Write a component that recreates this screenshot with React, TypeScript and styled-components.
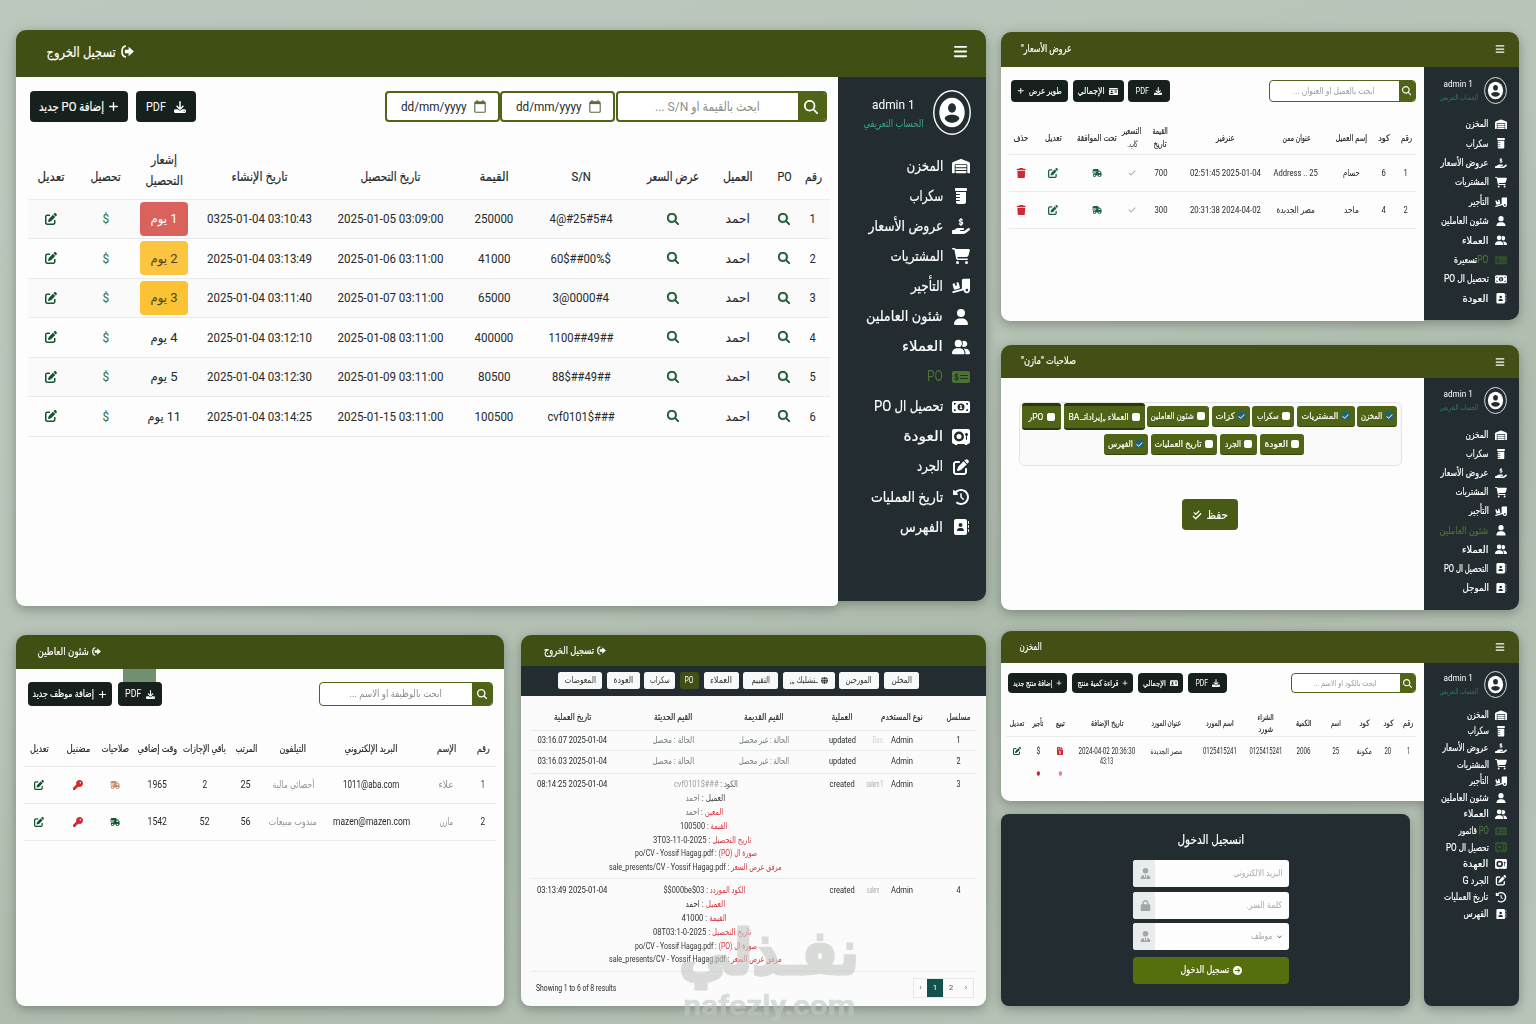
import React, { ReactNode, useLayoutEffect, useRef, useState } from "react";
import styled, { createGlobalStyle, css } from "styled-components";
import {
  FaWarehouse, FaPrescriptionBottle, FaHandHoldingDollar, FaCartShopping, FaTruckRampBox, FaUser, FaUserGroup,
  FaMoneyCheckDollar, FaMoneyBill1, FaVault, FaPenToSquare, FaClockRotateLeft, FaAddressBook, FaMagnifyingGlass,
  FaPlus, FaDownload, FaTruckFast, FaKey, FaTrash, FaBars, FaCheck, FaCheckDouble, FaLock, FaUserTie,
  FaChevronDown, FaCircleArrowRight, FaIdCard, FaFileInvoiceDollar, FaGlobe,
} from "react-icons/fa6";

const olive = "#404f13";
const oliveLight = "#4f6416";
const navy = "#232d31";
const ink = "#16201c";
const green = "#14532f";
const red = "#cf2a33";

const Global = createGlobalStyle`
  * { box-sizing: border-box; }
  body { margin: 0; font-family: Roboto, "DejaVu Sans Condensed", "DejaVu Sans", sans-serif; color: #24292b; }
  svg { display: block; flex: none; }
`;

/* Single-line text condensed horizontally to a given width */
const FitBox = styled.span<{ $w: number; $s: number; $c?: string; $b?: number }>`
  display: inline-flex; flex: none; justify-content: center; align-items: center;
  width: ${(p) => p.$w}px; height: ${(p) => Math.round(p.$s * 1.2)}px;
  font-size: ${(p) => p.$s}px; color: ${(p) => p.$c || "inherit"}; font-weight: ${(p) => (p.$b === 700 ? 700 : 400)};
  ${(p) => p.$b === 500 && css`-webkit-text-stroke: 0.18px currentColor;`}
  ${(p) => p.$b === 700 && css`-webkit-text-stroke: ${p.$s > 40 ? 3 : 0.5}px currentColor;`}
`;
const FitInner = styled.span`
  flex: none; white-space: nowrap; line-height: 1; display: inline-block;
`;
type TProps = { w: number; s?: number; c?: string; b?: number; ltr?: boolean; children: ReactNode };
function T({ w, s = 12, c, b, ltr, children }: TProps) {
  const ref = useRef<HTMLSpanElement>(null);
  const [k, setK] = useState(1);
  useLayoutEffect(() => {
    if (ref.current) setK(w / ref.current.offsetWidth);
  }, [w, s, b]);
  return (
    <FitBox $w={w} $s={s} $c={c} $b={b}>
      <FitInner ref={ref} dir={ltr ? "ltr" : "rtl"} style={{ transform: `scaleX(${k})` }}>{children}</FitInner>
    </FitBox>
  );
}

const Page = styled.main`
  position: relative; width: 1536px; height: 1024px; overflow: hidden;
  padding: 30px 17px 0 16px; display: flex; gap: 15px;
  background: linear-gradient(160deg, #bcc8bd 0%, #b8c4b8 40%, #aebcad 62%, #bac5b9 100%);
`;
const Left = styled.div`width: 970px; display: flex; flex-direction: column; gap: 29px;`;
const Bottom = styled.div`display: flex; gap: 17px;`;
const Right = styled.div`width: 518px; display: flex; flex-direction: column; padding-top: 2px;`;

const shadow = css`filter: drop-shadow(0 3px 6px rgba(50, 65, 50, 0.42));`;
const Window = styled.section<{ $w: number; $h: number; $mb?: number }>`
  width: ${(p) => p.$w}px; height: ${(p) => p.$h}px; margin-bottom: ${(p) => p.$mb || 0}px;
  display: flex; flex-direction: column; ${shadow}
`;
const TopBar = styled.header<{ $h: number; $pl: number; $pr: number; $bg?: string; $pb?: number }>`
  height: ${(p) => p.$h}px; flex: none; padding: 0 ${(p) => p.$pr}px ${(p) => p.$pb ?? 4}px ${(p) => p.$pl}px;
  display: flex; align-items: center; justify-content: space-between; color: #fff;
  background: ${(p) => p.$bg || olive}; border-radius: 10px 10px 0 0;
`;
const TitleGroup = styled.div<{ $g?: number }>`display: flex; align-items: center; gap: ${(p) => p.$g ?? 5}px;`;
const Split = styled.div`flex: 1; min-height: 0; display: flex; align-items: flex-start;`;
const Content = styled.div<{ $h?: number; $r?: string; $p: string; $bg?: string; $fixed?: boolean }>`
  flex: ${(p) => (p.$fixed ? "none" : 1)}; min-width: 0; height: ${(p) => (p.$h ? p.$h + "px" : "100%")};
  background: ${(p) => p.$bg || "#fdfdfd"}; border-radius: ${(p) => p.$r || "0 0 0 9px"};
  padding: ${(p) => p.$p}; display: flex; flex-direction: column;
`;

const Side = styled.aside<{ $w: number; $h: number; $r?: string }>`
  width: ${(p) => p.$w}px; height: ${(p) => p.$h}px; flex: none; background: ${navy};
  border-radius: ${(p) => p.$r || "0 0 10px 0"}; color: #fff; display: flex; flex-direction: column;
`;
const Profile = styled.div<{ $big?: boolean; $h: number; $pt: number }>`
  height: ${(p) => p.$h}px; flex: none; padding: ${(p) => p.$pt}px ${(p) => (p.$big ? 15.5 : 12)}px 0 0;
  display: flex; justify-content: flex-end; align-items: flex-start; gap: ${(p) => (p.$big ? 9 : 6)}px;
`;
const ProfileText = styled.div<{ $big?: boolean }>`
  display: flex; flex-direction: column; align-items: center; gap: ${(p) => (p.$big ? 5 : 3)}px;
  padding-top: ${(p) => (p.$big ? 6 : 2)}px;
`;
const NavItem = styled.div<{ $h: number; $big?: boolean; $off?: boolean; $dim?: boolean }>`
  height: ${(p) => p.$h}px; flex: none; display: flex; align-items: center; justify-content: flex-end;
  gap: ${(p) => (p.$big ? 9 : 6)}px; padding-right: ${(p) => (p.$big ? 16 : 12.5)}px;
  color: ${(p) => (p.$off ? "#4c7332" : "#fff")};
  & > svg { width: ${(p) => (p.$big ? 18 : 12)}px; height: ${(p) => (p.$big ? 16 : 10.5)}px;
    color: ${(p) => (p.$dim ? "#33522c" : "inherit")}; }
`;

function Avatar({ w, h }: { w: number; h: number }) {
  return (
    <svg width={w} height={h} viewBox="0 0 38 45">
      <ellipse cx="19" cy="22.5" rx="18.2" ry="21.7" fill="none" stroke="#fff" strokeWidth="1.4" />
      <ellipse cx="19" cy="22.5" rx="12.7" ry="14.7" fill="#fff" />
      <ellipse cx="19" cy="18" rx="4" ry="4.7" fill={navy} />
      <path d="M19 24.8c4.2 0 7.2 1.8 7.2 3.5 0 2.100-3.400 4.500-7.200 4.500s-7.200-2.400-7.200-4.500c0-1.700 3-3.500 7.200-3.500z" fill={navy} />
    </svg>
  );
}
function LogoutIcon({ s }: { s: number }) {
  return (
    <svg width={s} height={s} viewBox="0 0 14 14">
      <path d="M4.600 1.200C2.200 1.600 1.100 3.600 1.100 7s1.100 5.400 3.500 5.800" fill="none" stroke="#fff" strokeWidth="1.8" strokeLinecap="round" />
      <path d="M4.200 5.200h4V2L13.900 7l-5.700 5V8.800h-4z" fill="#fff" />
    </svg>
  );
}
function CalendarIcon() {
  return (
    <svg width="12" height="13" viewBox="0 0 12 13" fill="none" stroke="#5b6a40">
      <rect x=".8" y="1.900" width="10.400" height="10.300" rx="1" strokeWidth="1.100" />
      <path d="M1 3h10" strokeWidth="2.200" />
      <path d="M3 0v2M9 0v2" strokeWidth="1.200" />
    </svg>
  );
}

const I = {
  store: FaWarehouse, scrap: FaPrescriptionBottle, offers: FaHandHoldingDollar, cart: FaCartShopping, rent: FaTruckRampBox,
  user: FaUser, users: FaUserGroup, po: FaMoneyCheckDollar, cash: FaMoneyBill1, vault: FaVault, edit: FaPenToSquare,
  history: FaClockRotateLeft, book: FaAddressBook, card: FaIdCard,
};
type Nav = { i: keyof typeof I; t: ReactNode; w: number; off?: boolean; dim?: boolean };
type SideProps = { big?: boolean; w: number; h: number; top: number; pt: number; step: number; items: Nav[]; sub: string; r?: string };
function Sidebar({ big, w, h, top, pt, step, items, sub, r }: SideProps) {
  return (
    <Side $w={w} $h={h} $r={r}>
      <Profile $big={big} $h={top} $pt={pt}>
        <ProfileText $big={big}>
          <T w={big ? 43 : 29} s={big ? 13 : 9} ltr>admin 1</T>
          <T w={big ? 60 : 39} s={big ? 11 : 8} c={big ? "#38a58b" : "#28776a"}>{sub}</T>
        </ProfileText>
        <Avatar w={big ? 38 : 23} h={big ? 45 : 27} />
      </Profile>
      {items.map((n, k) => {
        const Icon = I[n.i];
        return (
          <NavItem key={k} $h={step} $big={big} $off={n.off} $dim={n.dim}>
            <T w={n.w} s={big ? 15 : 10} b={n.t === "PO" ? 400 : 500}>{n.t}</T>
            <Icon />
          </NavItem>
        );
      })}
    </Side>
  );
}

const Toolbar = styled.div<{ $h: number; $pl?: number; $pr?: number }>`
  height: ${(p) => p.$h}px; flex: none; display: flex; justify-content: space-between;
  padding: 0 ${(p) => p.$pr ?? 0}px 0 ${(p) => p.$pl ?? 0}px;
`;
const Group = styled.div<{ $g?: number }>`display: flex; gap: ${(p) => p.$g ?? 0}px; align-items: stretch;`;
const Btn = styled.button<{ $w: number }>`
  width: ${(p) => p.$w}px; border: 0; border-radius: 4px; padding: 0; background: ${ink}; color: #fff; font-family: inherit;
  display: flex; align-items: center; justify-content: center; gap: 4px;
`;
const Search = styled.div<{ $w: number }>`
  width: ${(p) => p.$w}px; border: 1.5px solid ${oliveLight}; border-radius: 4px; display: flex; background: #fff; overflow: hidden;
`;
const SearchField = styled.div`flex: 1; display: flex; align-items: center; justify-content: center;`;
const SearchBtn = styled.div<{ $w: number }>`
  width: ${(p) => p.$w}px; background: ${oliveLight}; color: #fff; display: flex; align-items: center; justify-content: center;
`;
const DateField = styled.div`
  width: 115px; border: 2px solid ${oliveLight}; border-radius: 4px; display: flex; align-items: center;
  justify-content: flex-end; gap: 7px; padding-right: 12px; background: #fff;
  &:nth-child(2) { margin-right: 1px; }
`;
const WideSearch = styled(Search)`border-width: 2px;`;
const Glass = styled(FaMagnifyingGlass)`width: 12px; height: 12px; color: ${green}; stroke: ${green}; stroke-width: 22px;`;

/* Tracks centred on the given x coordinates, with spacer tracks between them */
const tracks = (x0: number, cs: number[]) => {
  const half = cs.map((c, i) => Math.min(c - (i ? cs[i - 1] : 2 * x0 - c), (i < cs.length - 1 ? cs[i + 1] : 1e4) - c) / 2);
  const out: number[] = [cs[0] - half[0] - x0];
  cs.forEach((c, i) => {
    out.push(half[i] * 2);
    if (i < cs.length - 1) out.push(cs[i + 1] - half[i + 1] - c - half[i]);
  });
  return out.map((n) => n.toFixed(1) + "px").join(" ");
};
const Row = styled.div<{ $cols: string; $h: number; $bg?: string; $line?: boolean; $top?: boolean }>`
  display: grid; grid-template-columns: ${(p) => p.$cols}; height: ${(p) => p.$h}px; flex: none;
  background: ${(p) => p.$bg || "transparent"}; align-items: ${(p) => (p.$top ? "start" : "center")};
  border-bottom: 1px solid ${(p) => (p.$line === false ? "transparent" : "#e9ebea")};
`;
const Cell = styled.div<{ $i: number; $up?: number }>`
  grid-column: ${(p) => p.$i * 2 + 2}; min-width: 0; display: flex; flex-direction: column; align-items: center;
  justify-content: center; padding-bottom: ${(p) => p.$up || 0}px;
`;
const Lines = styled.div<{ $g: number }>`display: flex; flex-direction: column; align-items: center; gap: ${(p) => p.$g}px;`;
type RowProps = { cols: string; h: number; cells: ReactNode[]; bg?: string; line?: boolean; top?: boolean; up?: number[] };
function TRow({ cols, h, cells, bg, line, top, up }: RowProps) {
  return (
    <Row $cols={cols} $h={h} $bg={bg} $line={line} $top={top}>
      {cells.map((c, i) => <Cell key={i} $i={i} $up={up?.[i]}>{c}</Cell>)}
    </Row>
  );
}
const Gap = styled.div<{ $h: number }>`height: ${(p) => p.$h}px; flex: none;`;
const Badge = styled.div<{ $bg: string; $c: string }>`
  width: 48px; height: 34px; border-radius: 4px; display: flex; align-items: center; justify-content: center;
  background: ${(p) => p.$bg}; color: ${(p) => p.$c};
`;

/* ---------- Purchase orders ---------- */
const mainNav: Nav[] = [
  { i: "store", t: "المخزن", w: 37 }, { i: "scrap", t: "سكراب", w: 34 }, { i: "offers", t: "عروض الأسعار", w: 75 },
  { i: "cart", t: "المشتريات", w: 53 }, { i: "rent", t: "التأجير", w: 32 }, { i: "user", t: "شئون العاملين", w: 77 },
  { i: "users", t: "العملاء", w: 41 }, { i: "po", t: "PO", w: 16, off: true }, { i: "cash", t: "تحصيل ال PO", w: 69 },
  { i: "vault", t: "العودة", w: 39 }, { i: "edit", t: "الجرد", w: 26 }, { i: "history", t: "تاريخ العمليات", w: 72 },
  { i: "book", t: "الفهرس", w: 43 },
];
const poCols = tracks(28, [51, 106, 164, 259.5, 390, 494, 581, 673, 738, 784, 813]);
const poRows: [string, string, string, string, number, string, number][] = [
  ["1 يوم", "0325-01-04 03:10:43", "2025-01-05 03:09:00", "250000", 39, "4@#25#5#4", 63],
  ["2 يوم", "2025-01-04 03:13:49", "2025-01-06 03:11:00", "41000", 33, "60$##00%$", 60],
  ["3 يوم", "2025-01-04 03:11:40", "2025-01-07 03:11:00", "65000", 33, "3@0000#4", 57],
  ["4 يوم", "2025-01-04 03:12:10", "2025-01-08 03:11:00", "400000", 39, "1100##49##", 65],
  ["5 يوم", "2025-01-04 03:12:30", "2025-01-09 03:11:00", "80500", 33, "88$##49##", 59],
  ["11 يوم", "2025-01-04 03:14:25", "2025-01-15 03:11:00", "100500", 39, "cvf0101$###", 67],
];
const badges = [["#d9625d", "#fff"], ["#fbc441", "#4d4421"], ["#fbc233", "#4d4421"]];
function Orders() {
  const h = (w: number, t: string) => <T w={w} s={13} b={500}>{t}</T>;
  return (
    <Window $w={970} $h={576}>
      <TopBar $h={47} $pl={31} $pr={18}>
        <TitleGroup><T w={69} s={14} b={500}>تسجيل الخروج</T><LogoutIcon s={13} /></TitleGroup>
        <FaBars size={15} />
      </TopBar>
      <Split>
        <Content $h={529} $p="14px 8px 0 12px" $r="0 0 5px 9px">
          <Toolbar $h={31} $pl={2} $pr={3}>
            <Group $g={8}>
              <Btn $w={98}><T w={65} s={13} b={500}>إضافة PO جديد</T><FaPlus size={11} /></Btn>
              <Btn $w={60}><T w={20} s={13} ltr>PDF</T><Gap $h={0} /><FaDownload size={12} /></Btn>
            </Group>
            <Group>
              <DateField><T w={66} s={13.5} ltr>dd/mm/yyyy</T><CalendarIcon /></DateField>
              <DateField><T w={66} s={13.5} ltr>dd/mm/yyyy</T><CalendarIcon /></DateField>
              <WideSearch $w={211}>
                <SearchField><T w={105} s={13} c="#8b8f8c">ابحث بالقيمة او S/N ...</T></SearchField>
                <SearchBtn $w={27}><FaMagnifyingGlass size={14} /></SearchBtn>
              </WideSearch>
            </Group>
          </Toolbar>
          <Gap $h={29} />
          <TRow cols={poCols} h={48.5} up={[0, 0, 14]} cells={[
            h(27, "تعديل"), h(30, "تحصيل"), <Lines key="n" $g={5}>{h(26, "إشعار")}{h(37, "التحصيل")}</Lines>, h(56, "تاريخ الإنشاء"),
            h(60, "تاريخ التحصيل"), h(29, "القيمة"), h(19, "S/N"), h(52, "عرض السعر"), h(30, "العميل"), h(14, "PO"), h(17, "رقم"),
          ]} />
          {poRows.map((r, k) => (
            <TRow key={k} cols={poCols} h={39.5} bg={k % 2 ? undefined : "#fafafa"} cells={[
              <FaPenToSquare size={12} color={green} />,
              <T w={7} s={13.5} c="#2b6a44" ltr>$</T>,
              badges[k] ? <Badge $bg={badges[k][0]} $c={badges[k][1]}><T w={27} s={13}>{r[0]}</T></Badge> : <T w={k === 5 ? 33 : 27} s={13}>{r[0]}</T>,
              <T w={105} s={13} ltr>{r[1]}</T>, <T w={106} s={13} ltr>{r[2]}</T>, <T w={r[4]} s={13} ltr>{r[3]}</T>,
              <T w={r[6]} s={13} ltr>{r[5]}</T>, <Glass />, <T w={24} s={13}>احمد</T>,
              <Glass />, <T w={6} s={13} ltr>{k + 1}</T>,
            ]} />
          ))}
        </Content>
        <Sidebar big w={148.5} h={524} top={74} pt={13} step={30.1} items={mainNav} sub="الحساب التعريفي" />
      </Split>
    </Window>
  );
}

/* ---------- Employees ---------- */
const Tab = styled.div`width: 33px; height: 13px; margin-left: 99px; background: #71906f; flex: none;`;
const emCols = tracks(24, [39, 78, 115, 157, 204.5, 246, 293, 371, 446, 483]);
function Employees() {
  const h = (w: number, t: string) => <T w={w} s={10} b={500}>{t}</T>;
  const n = (w: number, t: string, c?: string) => <T w={w} s={10} c={c}>{t}</T>;
  return (
    <Window $w={488} $h={371}>
      <TopBar $h={34} $pl={22} $pr={12} $pb={2}>
        <TitleGroup $g={3}><T w={51} s={11} b={500}>شئون العاطين</T><LogoutIcon s={9} /></TitleGroup>
      </TopBar>
      <Content $r="0 0 9px 9px" $p="0 8px 0 8px">
        <Tab />
        <Toolbar $h={24} $pl={4} $pr={3}>
          <Group $g={6}>
            <Btn $w={84}><T w={61} s={10} b={500}>إضافة موظف جديد</T><FaPlus size={9} /></Btn>
            <Btn $w={44}><T w={16} s={10} ltr>PDF</T><FaDownload size={9} /></Btn>
          </Group>
          <Search $w={174}>
            <SearchField><T w={92} s={10} c="#8b8f8c">ابحث بالوظيفة او الاسم ...</T></SearchField>
            <SearchBtn $w={20}><FaMagnifyingGlass size={10.5} /></SearchBtn>
          </Search>
        </Toolbar>
        <Gap $h={26.5} />
        <TRow cols={emCols} h={34} cells={[
          h(19, "تعديل"), h(24, "مضنيل"), h(28, "صلاحيات"), h(40, "وقت إضافي"), h(43, "باقي الإجازات"), h(22, "المرتب"),
          h(26, "التيلفون"), h(53, "البريد الإلكتروني"), h(19, "الإسم"), h(13, "رقم"),
        ]} />
        <TRow cols={emCols} h={37} cells={[
          <FaPenToSquare size={10} color={green} />, <FaKey size={10} color={red} />, <FaTruckFast size={10} color="#cc8b68" />,
          n(19, "1965"), n(5, "2"), n(10, "25"), n(42, "أحصائي مالية", "#919693"), <T w={56} s={10} ltr>1011@aba.com</T>, n(15, "علاء", "#8a8f8c"), n(4, "1"),
        ]} />
        <TRow cols={emCols} h={37} cells={[
          <FaPenToSquare size={10} color={green} />, <FaKey size={10} color={red} />, <FaTruckFast size={10} color={green} />,
          n(19, "1542"), n(10, "52"), n(10, "56"), n(48, "مندوب مبيعات", "#919693"), <T w={77} s={10} ltr>mazen@mazen.com</T>, n(14, "مازن", "#8a8f8c"), n(5, "2"),
        ]} />
      </Content>
    </Window>
  );
}

/* ---------- Activity log ---------- */
const Strip = styled.nav`
  height: 30px; flex: none; background: ${navy}; display: flex; align-items: center; padding: 0 0 1px 37px; gap: 4.5px;
`;
const StripChip = styled.div<{ $w: number; $on?: boolean }>`
  width: ${(p) => p.$w}px; height: 17px; border-radius: 2.5px; display: flex; align-items: center; justify-content: center; gap: 3px;
  background: ${(p) => (p.$on ? olive : "#f7f9f8")}; color: ${(p) => (p.$on ? "#fff" : "#2b3236")};
`;
const strip: [number, string, number][] = [
  [44, "المعوضات", 31], [33, "العودة", 20], [31, "سكراب", 20], [19.5, "PO", 9], [35, "العملاء", 22], [35, "التقييم", 19],
  [52, "ـتشليك ,,,", 28], [40, "المورجين", 26], [35.5, "المخلن", 20],
];
const DetailLine = styled.div<{ $x: number }>`
  height: 13.9px; display: flex; align-items: center; margin-left: ${(p) => p.$x}px;
`;
const Key = styled.span<{ $c: string }>`color: ${(p) => p.$c};`;
const lgCols = tracks(531, [572.5, 673, 764, 842, 878, 902, 959]);
const DetailBox = styled.div`display: flex; flex-direction: column; align-items: center; width: 0; padding-left: 44px;`;
const Foot = styled.footer`height: 33px; display: flex; align-items: center; justify-content: space-between; padding: 0 2px 0 5px;`;
const Pager = styled.div`display: flex; height: 20px; border: 1px solid #e4e8e6; font-size: 8px;`;
const PageNo = styled.span<{ $on?: boolean; $w: number }>`
  width: ${(p) => p.$w}px; display: flex; align-items: center; justify-content: center; line-height: 1;
  background: ${(p) => (p.$on ? "#14534d" : "transparent")}; color: ${(p) => (p.$on ? "#fff" : "#555b58")};
`;
type Det = [string, string, number, number, string, string];
const det3: Det[] = [
  ["الكود", "cvf0101$###", 64, 22, "#5d6461", "#9a9f9c"], ["العميل", "احمد", 40, 20, "#3c4340", "#7b807d"],
  ["المعين", "احمد", 38, 18, "#d2353d", "#6b706d"], ["القيمة", "100500", 47, 18, "#d2353d", "#333"],
  ["تاريخ التحصيل", "3T03-11-0-2025", 98, 14, "#d2353d", "#333"], ["صورة ال (PO)", "po/CV - Yossif Hagag.pdf", 122, 2, "#d2353d", "#333"],
  ["مرفق عرض السعر", "sale_presents/CV - Yossif Hagag.pdf", 173, 0, "#d2353d", "#333"],
];
const det4: Det[] = [
  ["الكود الموردد", "$$000be$03", 82, 18, "#d2353d", "#333"], ["العميل", "احمد", 40, 20, "#d2353d", "#333"],
  ["القيمة", "41000", 45, 18, "#d2353d", "#333"], ["تاريخ التحصيل", "08T03:1-0-2025", 98, 14, "#d2353d", "#333"],
  ["صورة ال (PO)", "po/CV - Yossif Hagag.pdf", 122, 2, "#d2353d", "#333"],
  ["مرفق عرض السعر", "sale_presents/CV - Yossif Hagag.pdf", 173, 0, "#d2353d", "#333"],
];
function Details({ rows }: { rows: Det[] }) {
  return (
    <DetailBox>
      {rows.map((d, k) => (
        <DetailLine key={k} $x={d[3]}>
          <T w={d[2]} s={9}><Key $c={d[4]}>{d[0]}</Key> : <Key as="bdi" $c={d[5]}>{d[1]}</Key></T>
        </DetailLine>
      ))}
    </DetailBox>
  );
}
function Log() {
  const h = (w: number, t: string) => <T w={w} s={9.5} b={500}>{t}</T>;
  const n = (w: number, t: string, c?: string) => <T w={w} s={9} c={c}>{t}</T>;
  const d = (t: string) => <T w={70} s={9} ltr>{t}</T>;
  return (
    <Window $w={465} $h={371}>
      <TopBar $h={31} $pl={23} $pr={12} $pb={1}>
        <TitleGroup $g={3}><T w={50} s={11} b={500}>تسجيل الخروج</T><LogoutIcon s={9} /></TitleGroup>
      </TopBar>
      <Strip>
        {strip.map((c, k) => (
          <StripChip key={k} $w={c[0]} $on={k === 3}><T w={c[2]} s={9}>{c[1]}</T>{k === 6 && <FaGlobe size={7} />}</StripChip>
        ))}
      </Strip>
      <Content $r="0 0 9px 9px" $p="8px 10px 0 10px" $bg="#fbfbfb">
        <TRow cols={lgCols} h={26.5} cells={[
          h(37, "تاريخ العملية"), h(38, "القيم الحديثة"), h(40, "القيم القديمة"), h(21, "العملية"), null, h(42, "نوع المستخدم"), h(24, "مسلسل"),
        ]} />
        <TRow cols={lgCols} h={20.5} cells={[d("03:16.07 2025-01-04"), n(42, "الحالة : محصل", "#6f7c72"), n(50, "الحالة : غير محصل", "#6f7c72"), n(27, "updated"), n(10, "Ban", "#d0d3d1"), n(22, "Admin"), n(4, "1")]} />
        <TRow cols={lgCols} h={22.5} cells={[d("03:16.03 2025-01-04"), n(42, "الحالة : محصل", "#6f7c72"), n(50, "الحالة : غير محصل", "#6f7c72"), n(27, "updated"), null, n(22, "Admin"), n(4, "2")]} />
        <Gap $h={4} />
        <TRow top cols={lgCols} h={101} cells={[<DetailLine $x={0}>{d("08:14:25 2025-01-04")}</DetailLine>, <Details rows={det3} />, null,
          <DetailLine $x={0}>{n(25, "created")}</DetailLine>, <DetailLine $x={-6}>{n(17, "salem 1", "#a5aaa7")}</DetailLine>, <DetailLine $x={0}>{n(22, "Admin")}</DetailLine>, <DetailLine $x={0}>{n(4, "3")}</DetailLine>]} />
        <Gap $h={5} />
        <TRow top cols={lgCols} h={88} cells={[<DetailLine $x={0}>{d("03:13:49 2025-01-04")}</DetailLine>, <Details rows={det4} />, null,
          <DetailLine $x={0}>{n(25, "created")}</DetailLine>, <DetailLine $x={-10}>{n(12, "salem", "#a5aaa7")}</DetailLine>, <DetailLine $x={0}>{n(22, "Admin")}</DetailLine>, <DetailLine $x={0}>{n(4, "4")}</DetailLine>]} />
        <Foot>
          <T w={80} s={9} ltr>Showing 1 to 6 of 8 results</T>
          <Pager><PageNo $w={13}>‹</PageNo><PageNo $w={16} $on>1</PageNo><PageNo $w={16}>2</PageNo><PageNo $w={14}>›</PageNo></Pager>
        </Foot>
      </Content>
    </Window>
  );
}

/* ---------- Price offers ---------- */
const offersNav: Nav[] = [
  { i: "store", t: "المخزن", w: 23 }, { i: "scrap", t: "سكراب", w: 22 }, { i: "offers", t: "عروض الأسعار", w: 48 },
  { i: "cart", t: "المشتريات", w: 34 }, { i: "rent", t: "التأجير", w: 20 }, { i: "user", t: "شئون العاملين", w: 48 },
  { i: "users", t: "العملاء", w: 26 }, { i: "po", t: <><Key $c="#4c7332">PO</Key><Key $c="#fff">تسعيرة</Key></>, w: 34, dim: true },
  { i: "cash", t: "تحصيل ال PO", w: 45 }, { i: "book", t: "العودة", w: 26 },
];
const ofCols = tracks(1009, [1021, 1053, 1097, 1132, 1160.5, 1225, 1296, 1351, 1384, 1406]);
function Offers() {
  const h = (w: number, t: string) => <T w={w} s={9} b={500}>{t}</T>;
  const n = (w: number, t: string) => <T w={w} s={9.5}>{t}</T>;
  const acts = [<FaTrash size={10.5} color={red} />, <FaPenToSquare size={10} color="#17604b" />, <FaTruckFast size={10} color="#17604b" />, <FaCheck size={8} color="#a3aaa6" />];
  return (
    <Window $w={518} $h={289} $mb={24}>
      <TopBar $h={35} $pl={20} $pr={14} $bg="#434f15" $pb={1}>
        <T w={51} s={10.5} b={500}>عروض الأسعار"</T><FaBars size={10} />
      </TopBar>
      <Split>
        <Content $h={254} $p="13px 8px 0 8px">
          <Toolbar $h={22} $pl={2}>
            <Group $g={4.5}>
              <Btn $w={57}><FaPlus size={7.5} /><T w={33} s={9} b={500}>طوير عرض</T></Btn>
              <Btn $w={51}><T w={27} s={9} b={500}>الإجمالي</T><FaIdCard size={9} /></Btn>
              <Btn $w={42}><T w={14} s={9} ltr>PDF</T><FaDownload size={8.5} /></Btn>
            </Group>
            <Search $w={147}>
              <SearchField><T w={82} s={9} c="#999e9b">ابحث بالعميل او العنوان ...</T></SearchField>
              <SearchBtn $w={16}><FaMagnifyingGlass size={9.5} /></SearchBtn>
            </Search>
          </Toolbar>
          <Gap $h={20} />
          <TRow cols={ofCols} h={33} cells={[
            h(15, "حذف"), h(17, "تعديل"), h(40, "تحت الموافقة"), <Lines $g={2}>{h(19, "التسعير")}{h(10, "كاب..")}</Lines>,
            <Lines $g={2}>{h(15, "القيمة")}{h(13, "تاريخ")}</Lines>, h(19, "عنرفير"), h(28, "عنوان ممن"), h(32, "إسم العميل"), h(12, "كود"), h(11, "رقم"),
          ]} />
          <TRow cols={ofCols} h={37} cells={[...acts, n(13, "700"), <T w={71} s={9.5} ltr>02:51:45 2025-01-04</T>, <T w={44} s={9.5} ltr>Address .. 25</T>, n(17, "حسام"), n(4, "6"), n(4, "1")]} />
          <TRow cols={ofCols} h={37} cells={[...acts, n(13, "300"), <T w={71} s={9.5} ltr>20:31:38 2024-04-02</T>, n(38, "مصر الجديدة"), n(15, "ماجد"), n(4, "4"), n(4, "2")]} />
        </Content>
        <Sidebar w={95.5} h={253} top={47.5} pt={9.5} step={19.4} items={offersNav} sub="الحساب التعريفي" />
      </Split>
    </Window>
  );
}

/* ---------- Permissions ---------- */
const permsNav: Nav[] = [
  { i: "store", t: "المخزن", w: 23 }, { i: "scrap", t: "سكراب", w: 22 }, { i: "offers", t: "عروض الأسعار", w: 48 },
  { i: "cart", t: "المشتريات", w: 33 }, { i: "rent", t: "التأجير", w: 20 },
  { i: "user", t: <Key $c="#4c7332">شئون العاملين</Key>, w: 49 }, { i: "users", t: "العملاء", w: 26 },
  { i: "book", t: "التحصيل ال PO", w: 44 }, { i: "book", t: "الموجل", w: 26 },
];
const PermBox = styled.div`
  width: 383px; height: 64px; border: 1px solid #e3e5e4; border-radius: 6px; background: #fafafa; padding-top: 3px;
  display: flex; flex-direction: column; gap: 7px; align-items: center;
`;
const PermRow = styled.div<{ $g: number; $mr?: number }>`
  display: flex; height: 21px; gap: ${(p) => p.$g}px; align-items: stretch; margin-right: ${(p) => p.$mr || 0}px;
`;
const Perm = styled.div<{ $w: number; $tall?: boolean }>`
  width: ${(p) => p.$w}px; background: ${oliveLight}; border-radius: 3px; border-bottom: 1px solid #33420f; color: #fff; flex: none;
  display: flex; align-items: center; justify-content: center; gap: 3px;
  ${(p) => p.$tall && css`margin: -3px 0 -3px; border-top: 3px solid #2b3712; border-bottom: 2px solid #2b3712;`}
`;
const Box = styled.span<{ $on?: boolean }>`
  width: 8px; height: 8px; border-radius: 2px; background: ${(p) => (p.$on ? "#1d6474" : "#fff")}; color: #fff;
  display: flex; align-items: center; justify-content: center; flex: none;
`;
const SaveRow = styled.div`width: 383px; display: flex; justify-content: center; padding: 33px 2px 0 0;`;
const SaveBtn = styled.button`
  width: 56px; height: 31px; border: 0; border-radius: 4px; background: #485a15; color: #fff;
  display: flex; align-items: center; justify-content: center; gap: 5px; padding: 0; font-family: inherit;
`;
type P = [number, string, number, boolean?, boolean?];
const perms1: P[] = [
  [39, "POر", 15, false, true], [81, "العملاء ,,إيراداتـ.BA", 60, false, true], [62, "شئون العاملين", 43], [38, "كزات", 19, true], [42, "سكراب", 22],
  [58, "المشتريات", 37, true], [40, "المخزن", 21, true],
];
const perms2: P[] = [[44, "الفهرس", 25, true], [66, "تاريخ العمليات", 47], [37, "الجرد", 16], [44, "العودة", 24]];
const PermItems = ({ items }: { items: P[] }) => (
  <>{items.map((p, k) => (
    <Perm key={k} $w={p[0]} $tall={p[4]}><T w={p[2]} s={9} b={500}>{p[1]}</T><Box $on={p[3]}>{p[3] && <FaCheck size={7} />}</Box></Perm>
  ))}</>
);
function Permissions() {
  return (
    <Window $w={518} $h={265} $mb={21}>
      <TopBar $h={33} $pl={20} $pr={14} $bg="#434f15" $pb={0}>
        <T w={55} s={10.5} b={500}>صلاحيات "مازن"</T><FaBars size={10} />
      </TopBar>
      <Split>
        <Content $h={232} $p="24px 0 0 18px">
          <PermBox>
            <PermRow $g={2.5} $mr={2}><PermItems items={perms1} /></PermRow>
            <PermRow $g={3} $mr={14}><PermItems items={perms2} /></PermRow>
          </PermBox>
          <SaveRow><SaveBtn><FaCheckDouble size={10} /><T w={21} s={12} b={500}>حفظ</T></SaveBtn></SaveRow>
        </Content>
        <Sidebar w={95.5} h={232} top={47.5} pt={9} step={19.1} items={permsNav} sub="الحساب التعريفي" />
      </Split>
    </Window>
  );
}

/* ---------- Stock and sign-in ---------- */
const stockNav: Nav[] = [
  { i: "store", t: "المخزن", w: 22 }, { i: "scrap", t: "سكراب", w: 21 }, { i: "offers", t: "عروض الأسعار", w: 46 },
  { i: "cart", t: "المشتريات", w: 32 }, { i: "rent", t: "التأجير", w: 19 }, { i: "user", t: "شئون العاملين", w: 48 },
  { i: "users", t: "العملاء", w: 25 }, { i: "po", t: <><Key $c="#4c7332">PO</Key> <Key $c="#fff">قائمور</Key></>, w: 30, dim: true },
  { i: "vault", t: "تحصيل ال PO", w: 43, dim: true }, { i: "vault", t: "العهدة", w: 25 }, { i: "edit", t: "الجرد G", w: 26 },
  { i: "history", t: "تاريخ العمليات", w: 44 }, { i: "book", t: "الفهرس", w: 25 },
];
const stCols = tracks(1006, [1017, 1038, 1060, 1107, 1166, 1220, 1266, 1304, 1336, 1364, 1388, 1408]);
const Column = styled.div`width: 422.5px; flex: none; display: flex; flex-direction: column; gap: 13px;`;
const Login = styled.form`
  width: 409px; height: 192px; background: ${navy}; border-radius: 8px; display: flex; flex-direction: column; align-items: center;
  padding: 18px 0 0 11px; color: #fff;
`;
const Field = styled.div`
  width: 156px; height: 27px; margin-bottom: 4.5px; border-radius: 3px; background: #fdfdfd; color: #a8acaa; overflow: hidden;
  display: flex; justify-content: space-between; align-items: center; padding-right: 7px;
`;
const FieldIcon = styled.span`
  width: 22px; height: 100%; background: #e9ecec; display: flex; align-items: center; justify-content: center; color: #a1a7a6; padding-left: 2px;
`;
const Submit = styled.button`
  width: 156px; height: 27px; margin-top: 2px; border: 0; border-radius: 4px; background: #566f0e; color: #fff; font-family: inherit;
  display: flex; align-items: center; justify-content: center; gap: 4px;
`;
function Stock() {
  const h = (w: number, t: string) => <T w={w} s={8.5} b={500}>{t}</T>;
  const n = (w: number, t: string) => <T w={w} s={8.5}>{t}</T>;
  return (
    <Window $w={518} $h={375}>
      <TopBar $h={32} $pl={19} $pr={14} $bg="#434f15" $pb={0}>
        <T w={22} s={10.5} b={500}>المخزن</T><FaBars size={10} />
      </TopBar>
      <Split>
        <Column>
          <Content $h={138} $fixed $p="10px 8px 0 5px">
            <Toolbar $h={20} $pl={2}>
              <Group $g={5}>
                <Btn $w={59}><T w={39} s={8.5} b={500}>إضافة منتج جديد</T><FaPlus size={6} /></Btn>
                <Btn $w={61}><T w={41} s={8.5} b={500}>قراءة كمية منتج</T><FaPlus size={6} /></Btn>
                <Btn $w={45}><T w={23} s={8.5} b={500}>الإجمالي</T><FaIdCard size={8} /></Btn>
                <Btn $w={39}><T w={13} s={8.5} ltr>PDF</T><FaDownload size={8} /></Btn>
              </Group>
              <Search $w={125}>
                <SearchField><T w={63} s={8.5} c="#999e9b">ابحث بالكود او الاسم ...</T></SearchField>
                <SearchBtn $w={15}><FaMagnifyingGlass size={9} /></SearchBtn>
              </Search>
            </Toolbar>
            <Gap $h={18} />
            <TRow cols={stCols} h={26} cells={[
              h(15, "تعديل"), h(11, "تأجير"), h(9, "تبيع"), h(32, "تاريخ الإضافة"), h(30, "عنوان المورد"), h(28, "اسم المورد"),
              <Lines $g={2}>{h(16, "الشراء")}{h(14, "شورد")}</Lines>, h(16, "الكمية"), h(10, "اسم"), h(10, "كود"), h(10, "كود"), h(10, "رقم"),
            ]} />
            <TRow top cols={stCols} h={63} line={false} cells={[
              <><Gap $h={10} /><FaPenToSquare size={8} color={green} /></>,
              <><Gap $h={9} />{n(4, "$")}<Gap $h={13} /><T w={4} s={6} c={red}>●</T></>,
              <><Gap $h={10} /><FaFileInvoiceDollar size={8} color={red} /><Gap $h={14} /><T w={4} s={6} c="#e08488">●</T></>,
              <><Gap $h={9} /><T w={57} s={8.5} ltr>2024-04-02 20:36:30</T>{n(13, "43:13")}</>,
              <><Gap $h={9} />{n(32, "مصر الجديدة")}</>, <><Gap $h={9} />{n(34, "0125415241")}</>, <><Gap $h={9} />{n(33, "0125415241")}</>,
              <><Gap $h={9} />{n(14, "2006")}</>, <><Gap $h={9} />{n(7, "25")}</>, <><Gap $h={9} />{n(16, "مكونة")}</>,
              <><Gap $h={9} />{n(7, "20")}</>, <><Gap $h={9} />{n(3, "1")}</>,
            ]} />
          </Content>
          <Login>
            <T w={67} s={13.5} b={500}>انسجيل الدخول</T>
            <Gap $h={12} />
            <Field><FieldIcon><FaUserTie size={11} /></FieldIcon><T w={49} s={9}>البريد الالكتروني</T></Field>
            <Field><FieldIcon><FaLock size={11} /></FieldIcon><T w={36} s={9}>كلمة السر.</T></Field>
            <Field><FieldIcon><FaUserTie size={11} /></FieldIcon><TitleGroup><T w={21} s={9}>موظف</T><FaChevronDown size={5} color="#555" /></TitleGroup></Field>
            <Submit type="button"><T w={49} s={10.5} b={500}>تسجيل الدخول</T><FaCircleArrowRight size={9} /></Submit>
          </Login>
        </Column>
        <Sidebar w={95.5} h={343} top={43.5} pt={7.5} step={16.6} items={stockNav} sub="الحساب التعريفي" r="0 0 8px 8px" />
      </Split>
    </Window>
  );
}

const Watermark = styled.div`
  position: absolute; left: 677px; top: 916px; width: 184px; pointer-events: none; color: #c3c6c4; opacity: 0.6;
  display: flex; flex-direction: column; align-items: center;
`;

export default function App() {
  return (
    <Page>
      <Global />
      <Left>
        <Orders />
        <Bottom><Employees /><Log /></Bottom>
      </Left>
      <Right><Offers /><Permissions /><Stock /></Right>
      <Watermark>
        <T w={180} s={62} b={700}>نفـذلي</T>
        <T w={172} s={27} b={700} ltr>nafezly.com</T>
      </Watermark>
    </Page>
  );
}
